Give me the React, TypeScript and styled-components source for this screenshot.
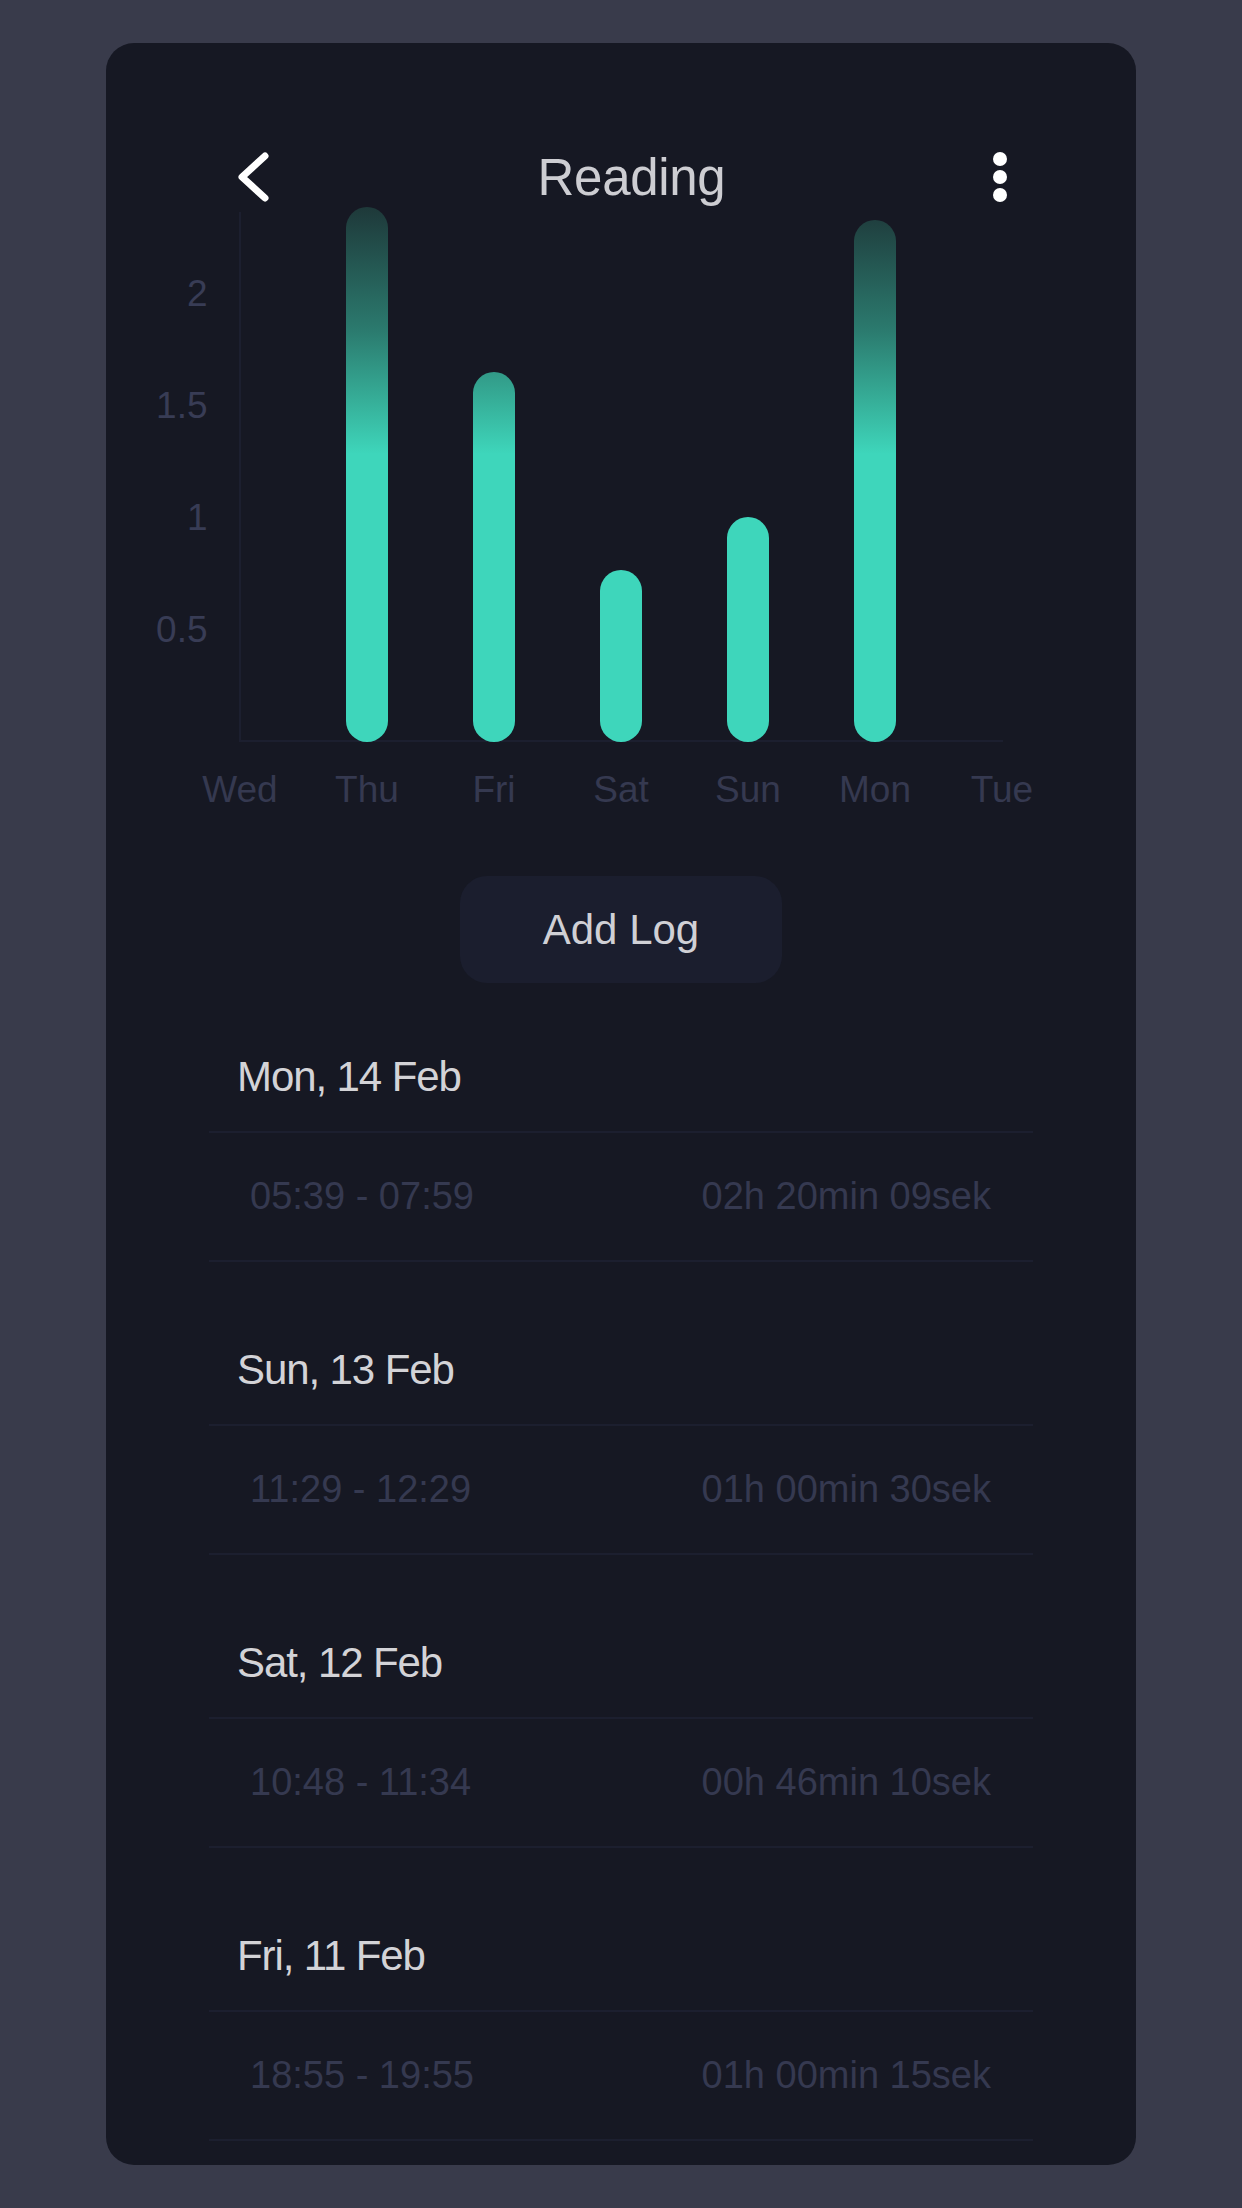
import React from "react";
import styled, { createGlobalStyle } from "styled-components";

const GlobalStyle = createGlobalStyle`
  html, body {
    margin: 0;
    padding: 0;
    background: #393b4b;
  }
  body {
    font-family: "Liberation Sans", Arial, sans-serif;
  }
`;

const Page = styled.div`
  box-sizing: border-box;
  width: 1242px;
  min-height: 2208px;
  padding: 43px 106px;
  background: #393b4b;
`;

const Card = styled.main`
  box-sizing: border-box;
  height: 2122px;
  background: #161823;
  border-radius: 28px;
  padding-top: 99px;
  display: flex;
  flex-direction: column;
  overflow: hidden;
`;

const Header = styled.header`
  flex-shrink: 0;
  height: 70px;
  display: grid;
  grid-template-columns: auto 1fr auto;
  align-items: center;
  padding: 0 129px 0 131px;
`;

const IconButton = styled.button`
  background: none;
  border: none;
  padding: 0;
  margin: 0;
  display: flex;
  align-items: center;
  justify-content: center;
  cursor: pointer;
`;

const Title = styled.h1`
  margin: 0;
  text-align: center;
  font-size: 51px;
  font-weight: 400;
  line-height: 1;
  letter-spacing: -0.3px;
  color: #cdcdd2;
`;

const Chart = styled.section`
  flex-shrink: 0;
  margin-left: 70.5px;
  width: 889px;
  display: flex;
  flex-direction: column;
`;

const Plot = styled.div`
  position: relative;
  height: 530px;
  display: grid;
  grid-template-columns: repeat(7, 127px);
  grid-template-rows: minmax(0, 1fr);

  &::before {
    content: "";
    position: absolute;
    left: 62.5px;
    top: 0;
    bottom: 0;
    width: 2px;
    background: #1c1f2f;
  }
  &::after {
    content: "";
    position: absolute;
    left: 62.5px;
    right: 62.5px;
    bottom: 0;
    height: 2px;
    background: #1c1f2f;
  }
`;

const Slot = styled.div`
  min-height: 0;
  display: flex;
  justify-content: center;
  align-items: flex-end;
`;

const Bar = styled.div`
  position: relative;
  z-index: 1;
  flex-shrink: 0;
  width: 42px;
  border-radius: 21px;
  background: #3ed6bb;
`;

const Tick = styled.span<{ $v: number }>`
  position: absolute;
  right: calc(100% - 31px);
  bottom: ${(p) => p.$v * 224}px;
  transform: translateY(50%);
  font-size: 37px;
  line-height: 44px;
  color: #383c55;
  white-space: nowrap;
`;

const DayRow = styled.div`
  margin-top: 26px;
  display: grid;
  grid-template-columns: repeat(7, 127px);
`;

const Day = styled.span`
  text-align: center;
  font-size: 37px;
  line-height: 44px;
  color: #353950;
`;

const AddButton = styled.button`
  flex-shrink: 0;
  align-self: center;
  margin-top: 64px;
  width: 322px;
  height: 107px;
  border: none;
  border-radius: 27px;
  background: #1b1e2e;
  color: #d0d0d5;
  font-family: "Liberation Sans", Arial, sans-serif;
  font-size: 42px;
  font-weight: 400;
  cursor: pointer;
`;

const List = styled.section`
  flex-shrink: 0;
  margin: 69px 103px 0;
  display: flex;
  flex-direction: column;
  gap: 83px;
`;

const Group = styled.div`
  display: flex;
  flex-direction: column;
`;

const DateHeader = styled.h2`
  margin: 0;
  padding: 0 0 29px 28px;
  font-size: 42px;
  font-weight: 400;
  line-height: 50px;
  letter-spacing: -1.1px;
  color: #d3d3d7;
  border-bottom: 2px solid #1c1f2f;
`;

const Entry = styled.div`
  height: 127px;
  display: flex;
  align-items: center;
  justify-content: space-between;
  padding: 0 42px 0 41px;
  font-size: 38px;
  color: #353950;
  border-bottom: 2px solid #1c1f2f;
`;

const days = ["Wed", "Thu", "Fri", "Sat", "Sun", "Mon", "Tue"];
const barHeights: (number | null)[] = [null, 535, 370, 172, 225, 522, null];
const ticks = [
  { v: 2, label: "2" },
  { v: 1.5, label: "1.5" },
  { v: 1, label: "1" },
  { v: 0.5, label: "0.5" },
];

const logs = [
  { date: "Mon, 14 Feb", range: "05:39 - 07:59", dur: "02h 20min 09sek" },
  { date: "Sun, 13 Feb", range: "11:29 - 12:29", dur: "01h 00min 30sek" },
  { date: "Sat, 12 Feb", range: "10:48 - 11:34", dur: "00h 46min 10sek" },
  { date: "Fri, 11 Feb", range: "18:55 - 19:55", dur: "01h 00min 15sek" },
];

// gradient fixed to chart space: stops measured from plot bottom
const barGradient = (h: number) =>
  `linear-gradient(180deg, #1e3839 ${h - 536}px, #2b7a6e ${h - 412}px, #36ae98 ${h - 342}px, #3ed6bb ${h - 288}px)`;

const BackIcon = () => (
  <svg width="33" height="50" viewBox="0 0 33 50" fill="none">
    <polyline
      points="28,4 5,25 28,46"
      stroke="#ffffff"
      strokeWidth="7"
      strokeLinecap="round"
      strokeLinejoin="round"
    />
  </svg>
);

const MoreIcon = () => (
  <svg width="14" height="50" viewBox="0 0 14 50" fill="#ffffff">
    <circle cx="7" cy="7" r="7" />
    <circle cx="7" cy="25" r="7" />
    <circle cx="7" cy="43" r="7" />
  </svg>
);

export default function App() {
  return (
    <Page>
      <GlobalStyle />
      <Card>
        <Header>
          <IconButton aria-label="Back">
            <BackIcon />
          </IconButton>
          <Title>Reading</Title>
          <IconButton aria-label="More">
            <MoreIcon />
          </IconButton>
        </Header>

        <Chart>
          <Plot>
            {ticks.map((t) => (
              <Tick key={t.label} $v={t.v}>
                {t.label}
              </Tick>
            ))}
            {barHeights.map((h, i) => (
              <Slot key={i}>
                {h !== null && (
                  <Bar style={{ height: `${h}px`, background: barGradient(h) }} />
                )}
              </Slot>
            ))}
          </Plot>
          <DayRow>
            {days.map((d) => (
              <Day key={d}>{d}</Day>
            ))}
          </DayRow>
        </Chart>

        <AddButton>Add Log</AddButton>

        <List>
          {logs.map((l) => (
            <Group key={l.date}>
              <DateHeader>{l.date}</DateHeader>
              <Entry>
                <span>{l.range}</span>
                <span>{l.dur}</span>
              </Entry>
            </Group>
          ))}
        </List>
      </Card>
    </Page>
  );
}
